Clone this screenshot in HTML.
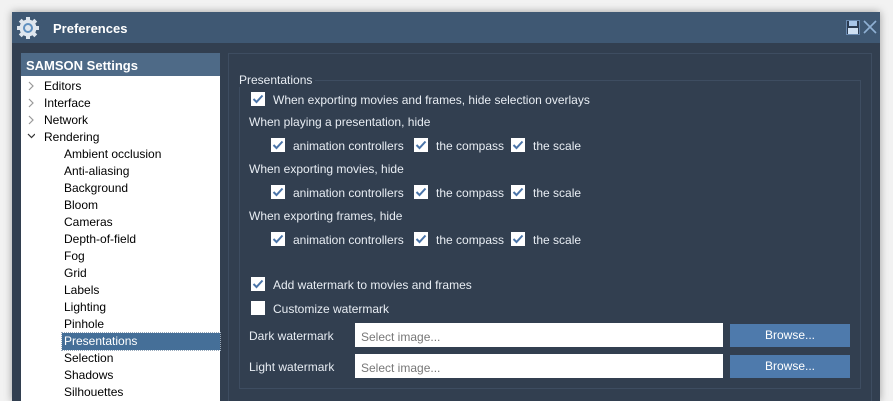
<!DOCTYPE html>
<html><head><meta charset="utf-8"><style>
*{box-sizing:border-box;margin:0;padding:0}
html,body{width:893px;height:401px;overflow:hidden}
body{background:#f2f2f2;position:relative;font-family:"Liberation Sans",sans-serif;font-size:12px;color:#e8edf3}
.win{position:absolute;left:12px;top:12px;width:868px;height:389px;background:#323f50;box-shadow:0 0 8px rgba(0,0,0,.35);overflow:hidden}
.title{position:absolute;left:0;top:0;width:868px;height:31px;background:#3f5873}
.title .t{position:absolute;left:41px;top:9px;font-weight:bold;font-size:13px;color:#fff}
.lp{position:absolute;left:9px;top:41px;width:199px;height:348px;background:#fff}
.lph{height:23px;background:#4e6a87;color:#fff;font-weight:bold;font-size:13px;padding:5px 0 0 5px}
.it{position:absolute;height:17px;line-height:17px;color:#000;font-size:12px}
.sel{background:#456f98;color:#fff;outline:1px dotted #9ab;}
.outer{position:absolute;left:216px;top:41px;width:644px;height:360px;border:1px solid #3e4d61}
.grp{position:absolute;left:227px;top:68px;width:622px;height:309px;border:1px solid #3e4d61}
.gl{position:absolute;left:225px;top:61px;background:#323f50;padding:0 3px 0 2px;color:#e8edf3}
.cb{position:absolute;width:14px;height:14px;background:#fff}
.cb svg{position:absolute;left:0;top:0}
.tx{position:absolute;line-height:14px;white-space:nowrap}
.inp{position:absolute;background:#fff;color:#777;padding:7px 0 0 6px;height:24px;width:368px}
.btn{position:absolute;background:#4e7aac;color:#fff;width:120px;height:23px;text-align:center;line-height:23px}
</style></head><body>
<div class="win">
<div class="title">
<svg style="position:absolute;left:4px;top:4px" width="24" height="24" viewBox="0 0 24 24"><g fill="#dfe6ee"><circle cx="12" cy="12" r="8.5"/><g id="tt"><rect x="10" y="1" width="4" height="5"/><rect x="10" y="18" width="4" height="5"/><rect x="1" y="10" width="5" height="4"/><rect x="18" y="10" width="5" height="4"/></g><use href="#tt" transform="rotate(45 12 12)"/></g><circle cx="12" cy="12" r="5" fill="#5f8fbf"/><circle cx="12" cy="12" r="3" fill="#dfe6ee"/></svg>
<div class="t">Preferences</div>
<svg style="position:absolute;left:834px;top:8px" width="14" height="15" viewBox="0 0 14 15"><rect x="0.5" y="0.5" width="13" height="14" fill="#2c3c52" stroke="#6a8ab0"/><rect x="3" y="1" width="8" height="5" fill="#a9c7ea"/><rect x="2" y="8" width="10" height="6" fill="#cfe0f3"/></svg>
<svg style="position:absolute;left:851px;top:8px" width="14" height="14" viewBox="0 0 14 14"><path d="M1 1L13 13M13 1L1 13" stroke="#8fb0d4" stroke-width="1.6"/></svg>
</div>
<div class="lp"><div class="lph">SAMSON Settings</div></div>
<div class="outer"></div>
<div class="grp"></div>
<div class="gl">Presentations</div>
</div>
<svg style="position:absolute;left:27px;top:81px" width="8" height="60" viewBox="0 0 8 60"><path d="M2 1l4 4-4 4M2 18l4 4-4 4M2 35l4 4-4 4" fill="none" stroke="#999" stroke-width="1.2"/><path d="M1 53l3.5 3.5L8 53" fill="none" stroke="#333" stroke-width="1.2"/></svg>
<div class="it" style="left:44px;top:78px">Editors</div>
<div class="it" style="left:44px;top:95px">Interface</div>
<div class="it" style="left:44px;top:112px">Network</div>
<div class="it" style="left:44px;top:129px">Rendering</div>
<div class="it" style="left:64px;top:146px">Ambient occlusion</div>
<div class="it" style="left:64px;top:163px">Anti-aliasing</div>
<div class="it" style="left:64px;top:180px">Background</div>
<div class="it" style="left:64px;top:197px">Bloom</div>
<div class="it" style="left:64px;top:214px">Cameras</div>
<div class="it" style="left:64px;top:231px">Depth-of-field</div>
<div class="it" style="left:64px;top:248px">Fog</div>
<div class="it" style="left:64px;top:265px">Grid</div>
<div class="it" style="left:64px;top:282px">Labels</div>
<div class="it" style="left:64px;top:299px">Lighting</div>
<div class="it" style="left:64px;top:316px">Pinhole</div>
<div class="it sel" style="left:62px;top:333px;width:158px;padding-left:2px">Presentations</div>
<div class="it" style="left:64px;top:350px">Selection</div>
<div class="it" style="left:64px;top:367px">Shadows</div>
<div class="it" style="left:64px;top:384px">Silhouettes</div>
<div class="cb" style="left:251px;top:92px"><svg width="14" height="14"><path d="M2.5 7l3 3 6-6.5" fill="none" stroke="#4a74a8" stroke-width="2"/></svg></div>
<div class="tx" style="left:273px;top:93px">When exporting movies and frames, hide selection overlays</div>
<div class="tx" style="left:249px;top:115px">When playing a presentation, hide</div>
<div class="tx" style="left:249px;top:162px">When exporting movies, hide</div>
<div class="tx" style="left:249px;top:209px">When exporting frames, hide</div>
<div class="cb" style="left:271px;top:138px"><svg width="14" height="14"><path d="M2.5 7l3 3 6-6.5" fill="none" stroke="#4a74a8" stroke-width="2"/></svg></div>
<div class="tx" style="left:293px;top:139px">animation controllers</div>
<div class="cb" style="left:414px;top:138px"><svg width="14" height="14"><path d="M2.5 7l3 3 6-6.5" fill="none" stroke="#4a74a8" stroke-width="2"/></svg></div>
<div class="tx" style="left:436px;top:139px">the compass</div>
<div class="cb" style="left:511px;top:138px"><svg width="14" height="14"><path d="M2.5 7l3 3 6-6.5" fill="none" stroke="#4a74a8" stroke-width="2"/></svg></div>
<div class="tx" style="left:533px;top:139px">the scale</div>
<div class="cb" style="left:271px;top:185px"><svg width="14" height="14"><path d="M2.5 7l3 3 6-6.5" fill="none" stroke="#4a74a8" stroke-width="2"/></svg></div>
<div class="tx" style="left:293px;top:186px">animation controllers</div>
<div class="cb" style="left:414px;top:185px"><svg width="14" height="14"><path d="M2.5 7l3 3 6-6.5" fill="none" stroke="#4a74a8" stroke-width="2"/></svg></div>
<div class="tx" style="left:436px;top:186px">the compass</div>
<div class="cb" style="left:511px;top:185px"><svg width="14" height="14"><path d="M2.5 7l3 3 6-6.5" fill="none" stroke="#4a74a8" stroke-width="2"/></svg></div>
<div class="tx" style="left:533px;top:186px">the scale</div>
<div class="cb" style="left:271px;top:232px"><svg width="14" height="14"><path d="M2.5 7l3 3 6-6.5" fill="none" stroke="#4a74a8" stroke-width="2"/></svg></div>
<div class="tx" style="left:293px;top:233px">animation controllers</div>
<div class="cb" style="left:414px;top:232px"><svg width="14" height="14"><path d="M2.5 7l3 3 6-6.5" fill="none" stroke="#4a74a8" stroke-width="2"/></svg></div>
<div class="tx" style="left:436px;top:233px">the compass</div>
<div class="cb" style="left:511px;top:232px"><svg width="14" height="14"><path d="M2.5 7l3 3 6-6.5" fill="none" stroke="#4a74a8" stroke-width="2"/></svg></div>
<div class="tx" style="left:533px;top:233px">the scale</div>
<div class="cb" style="left:251px;top:277px"><svg width="14" height="14"><path d="M2.5 7l3 3 6-6.5" fill="none" stroke="#4a74a8" stroke-width="2"/></svg></div>
<div class="tx" style="left:273px;top:278px">Add watermark to movies and frames</div>
<div class="cb" style="left:251px;top:301px"></div>
<div class="tx" style="left:273px;top:302px">Customize watermark</div>
<div class="tx" style="left:249px;top:329px">Dark watermark</div>
<div class="tx" style="left:249px;top:360px">Light watermark</div>
<div class="inp" style="left:355px;top:323px">Select image...</div>
<div class="inp" style="left:355px;top:354px">Select image...</div>
<div class="btn" style="left:730px;top:324px">Browse...</div>
<div class="btn" style="left:730px;top:355px">Browse...</div>
</body></html>
